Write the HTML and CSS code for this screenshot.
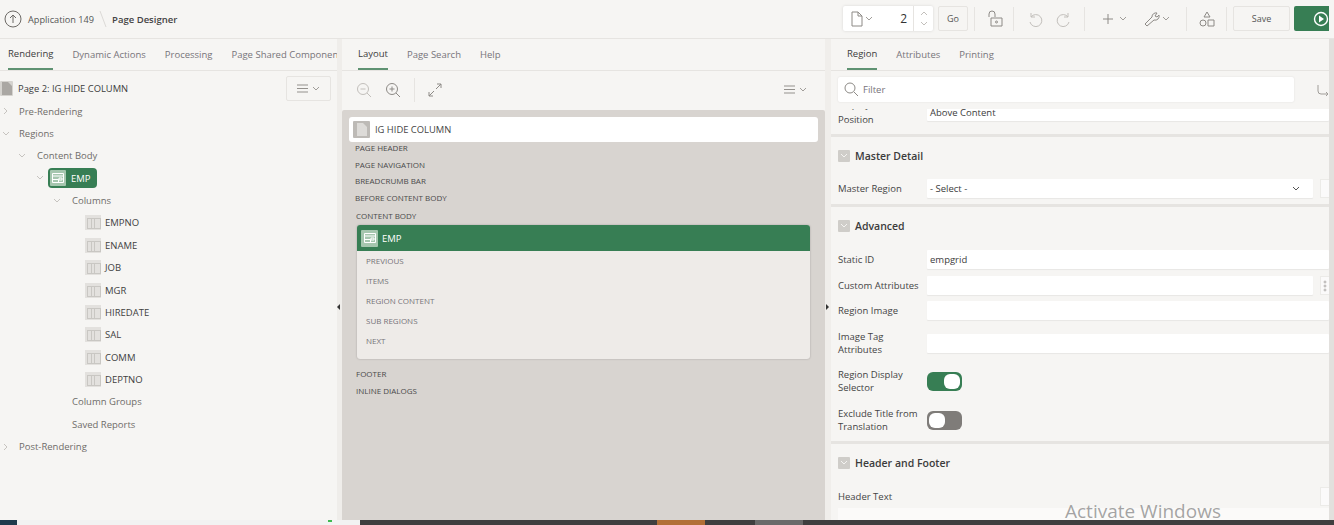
FILE: index.html
```html
<!DOCTYPE html>
<html lang="en">
<head>
<meta charset="utf-8">
<title>Page Designer</title>
<link rel="stylesheet" href="styles.css">
</head>
<body>
<div class="app">
  <header class="topbar">
    <svg class="up" viewBox="0 0 18 18" width="18" height="18"><circle cx="9" cy="9" r="8"/><path d="M9 13V5M6 8l3-3 3 3"/></svg>
    <span class="crumb">Application 149</span>
    <svg class="slash" viewBox="0 0 8 18" width="8" height="18"><path d="M1 1l6 16"/></svg>
    <span class="crumb current">Page Designer</span>
    <div class="tools">
      <div class="pagebox">
        <svg class="ic" viewBox="0 0 12 16" width="12" height="16"><path d="M1 1h6l4 4v10H1zM7 1v4h4"/></svg>
        <svg class="chev" viewBox="0 0 8 5" width="8" height="5"><path d="M1 1l3 3 3-3"/></svg>
        <span class="pagenum">2</span>
        <span class="spin">
          <svg class="chev" viewBox="0 0 8 5" width="8" height="5"><path d="M1 4l3-3 3 3"/></svg>
          <svg class="chev" viewBox="0 0 8 5" width="8" height="5"><path d="M1 1l3 3 3-3"/></svg>
        </span>
      </div>
      <span class="btn go">Go</span>
      <span class="vr vr-a"></span>
      <svg class="ic lock" viewBox="0 0 16 17" width="16" height="17"><path d="M2 7V4a3 3 0 0 1 6 0v3M4 8h11v8H4z"/><circle cx="9.500" cy="12" r="1"/></svg>
      <span class="vr vr-b"></span>
      <svg class="ic faint undo" viewBox="0 0 16 16" width="16" height="16"><path d="M4 2v4h4M4 6a6 6 0 1 1-1 5"/></svg>
      <svg class="ic faint redo" viewBox="0 0 16 16" width="16" height="16"><path d="M12 2v4H8M12 6a6 6 0 1 0 1 5"/></svg>
      <span class="vr vr-c"></span>
      <svg class="ic plus" viewBox="0 0 12 12" width="12" height="12"><path d="M6 1v10M1 6h10"/></svg>
      <svg class="chev chev-gap" viewBox="0 0 8 5" width="8" height="5"><path d="M1 1l3 3 3-3"/></svg>
      <svg class="ic wrench" viewBox="0 0 16 16" width="16" height="16"><path d="M1 13l7-7a4 4 0 0 1 5-4l-2 3 2 1 2-2a4 4 0 0 1-5 5l-7 6z"/></svg>
      <svg class="chev chev-gap2" viewBox="0 0 8 5" width="8" height="5"><path d="M1 1l3 3 3-3"/></svg>
      <span class="vr vr-d"></span>
      <svg class="ic shapes" viewBox="0 0 16 16" width="16" height="16"><path d="M8 1l3 5H5z"/><circle cx="4" cy="12" r="3"/><path d="M9 9h6v6H9z"/></svg>
      <span class="vr vr-e"></span>
      <span class="btn save">Save</span>
      <span class="run"><svg class="play" viewBox="0 0 16 16" width="16" height="16"><circle cx="8" cy="8" r="6.500"/><path class="tri" d="M6 4.500l5 3.500-5 3.500z"/></svg></span>
    </div>
  </header>

  <main class="work">
    <section class="left">
      <nav class="tabs tabs-left">
        <span class="tab active">Rendering</span>
        <span class="tab">Dynamic Actions</span>
        <span class="tab">Processing</span>
        <span class="tab">Page Shared Components</span>
      </nav>
      <div class="pagehead">
        <span class="pageicon"><svg viewBox="0 0 10 13" width="10" height="13"><path d="M0 0h6l4 4v9H0z"/></svg></span>
        <span class="pagetitle">Page 2: IG HIDE COLUMN</span>
        <span class="menubtn">
          <svg class="burger" viewBox="0 0 11 9" width="11" height="9"><path d="M0 1h11M0 4.500h11M0 8h11"/></svg>
          <svg class="chev" viewBox="0 0 8 5" width="8" height="5"><path d="M1 1l3 3 3-3"/></svg>
        </span>
      </div>
      <ul class="tree">
        <li class="node l0"><svg class="twist" viewBox="0 0 8 8" width="8" height="8"><path d="M2 1l3 3-3 3"/></svg>Pre-Rendering</li>
        <li class="node l0"><svg class="twist" viewBox="0 0 8 6" width="8" height="6"><path d="M1 1l3 3 3-3"/></svg>Regions</li>
        <li class="node l1"><svg class="twist" viewBox="0 0 8 6" width="8" height="6"><path d="M1 1l3 3 3-3"/></svg>Content Body</li>
        <li class="node l2">
          <svg class="twist" viewBox="0 0 8 6" width="8" height="6"><path d="M1 1l3 3 3-3"/></svg>
          <span class="badge"><span class="regicon"><svg viewBox="0 0 12 10" width="12" height="10"><path d="M.5.500h11v9H.500zM.5 3h11M.5 6.500h6v3M7 5h3v2H7z"/></svg></span>EMP</span>
        </li>
        <li class="node l3"><svg class="twist" viewBox="0 0 8 6" width="8" height="6"><path d="M1 1l3 3 3-3"/></svg>Columns</li>
        <li class="node leaf"><span class="colicon"></span>EMPNO</li>
        <li class="node leaf"><span class="colicon"></span>ENAME</li>
        <li class="node leaf"><span class="colicon"></span>JOB</li>
        <li class="node leaf"><span class="colicon"></span>MGR</li>
        <li class="node leaf"><span class="colicon"></span>HIREDATE</li>
        <li class="node leaf"><span class="colicon"></span>SAL</li>
        <li class="node leaf"><span class="colicon"></span>COMM</li>
        <li class="node leaf"><span class="colicon"></span>DEPTNO</li>
        <li class="node l3x">Column Groups</li>
        <li class="node l3x">Saved Reports</li>
        <li class="node l0"><svg class="twist" viewBox="0 0 8 8" width="8" height="8"><path d="M2 1l3 3-3 3"/></svg>Post-Rendering</li>
      </ul>
    </section>

    <div class="split"><span class="arrow arrow-l"></span></div>

    <section class="center">
      <nav class="tabs tabs-center">
        <span class="tab active">Layout</span>
        <span class="tab">Page Search</span>
        <span class="tab">Help</span>
      </nav>
      <div class="layout-tools">
        <svg class="ic faint" viewBox="0 0 16 16" width="16" height="16"><circle cx="7" cy="7" r="5.500"/><path d="M11 11l4 4M4.500 7h5"/></svg>
        <svg class="ic zoomin" viewBox="0 0 16 16" width="16" height="16"><circle cx="7" cy="7" r="5.500"/><path d="M11 11l4 4M4.500 7h5M7 4.500v5"/></svg>
        <span class="vr vr-f"></span>
        <svg class="ic" viewBox="0 0 14 14" width="14" height="14"><path d="M8 6l5-5M9 1h4v4M6 8l-5 5M1 9v4h4"/></svg>
        <span class="menu-right">
          <svg class="burger" viewBox="0 0 11 9" width="11" height="9"><path d="M0 1h11M0 4.500h11M0 8h11"/></svg>
          <svg class="chev" viewBox="0 0 8 5" width="8" height="5"><path d="M1 1l3 3 3-3"/></svg>
        </span>
      </div>
      <div class="canvas">
        <div class="pagecard">
          <span class="pageicon small"><svg viewBox="0 0 10 13" width="10" height="13"><path d="M0 0h6l4 4v9H0z"/></svg></span>
          <span>IG HIDE COLUMN</span>
        </div>
        <div class="slots">
          <div class="slot s1">PAGE HEADER</div>
          <div class="slot s2">PAGE NAVIGATION</div>
          <div class="slot s3">BREADCRUMB BAR</div>
          <div class="slot s4">BEFORE CONTENT BODY</div>
          <div class="slot s5">CONTENT BODY</div>
        </div>
        <div class="regioncard">
          <div class="regionhead"><span class="regicon big"><svg viewBox="0 0 12 10" width="12" height="10"><path d="M.5.500h11v9H.500zM.5 3h11M.5 6.500h6v3M7 5h3v2H7z"/></svg></span>EMP</div>
          <div class="regionbody">
            <div class="sub">PREVIOUS</div>
            <div class="sub">ITEMS</div>
            <div class="sub">REGION CONTENT</div>
            <div class="sub">SUB REGIONS</div>
            <div class="sub">NEXT</div>
          </div>
        </div>
        <div class="slots after">
          <div class="slot s6">FOOTER</div>
          <div class="slot s7">INLINE DIALOGS</div>
        </div>
      </div>
    </section>

    <div class="split split-r"><span class="arrow arrow-r"></span></div>

    <section class="right">
      <nav class="tabs tabs-right">
        <span class="tab active">Region</span>
        <span class="tab">Attributes</span>
        <span class="tab">Printing</span>
      </nav>
      <div class="filterrow">
        <div class="filter">
          <svg class="ic" viewBox="0 0 15 15" width="15" height="15"><circle cx="6" cy="6" r="5"/><path d="M10 10l4 4"/></svg>
          <span>Filter</span>
        </div>
        <svg class="ic goto" viewBox="0 0 12 12" width="12" height="12"><path d="M1 1v6a3 3 0 0 0 3 3h7M9 8l2 2-2 2"/></svg>
      </div>
      <div class="props">
        <div class="props-inner">
          <div class="prop clip-first">
            <label class="plabel">Display<br>Position</label>
            <div class="input wide">Above Content</div>
          </div>
          <div class="sep"></div>
          <h3 class="sec"><span class="secbox"><svg class="chev white" viewBox="0 0 8 5" width="8" height="5"><path d="M1 1l3 3 3-3"/></svg></span>Master Detail</h3>
          <div class="prop p-master">
            <label class="plabel">Master Region</label>
            <div class="input narrow select">- Select -<svg class="chev dark" viewBox="0 0 8 5" width="8" height="5"><path d="M1 1l3 3 3-3"/></svg></div>
            <span class="mini"></span>
          </div>
          <div class="sep sep2"></div>
          <h3 class="sec"><span class="secbox"><svg class="chev white" viewBox="0 0 8 5" width="8" height="5"><path d="M1 1l3 3 3-3"/></svg></span>Advanced</h3>
          <div class="prop p-static">
            <label class="plabel">Static ID</label>
            <div class="input wide">empgrid</div>
          </div>
          <div class="prop">
            <label class="plabel">Custom Attributes</label>
            <div class="input narrow"></div>
            <span class="mini dots"><svg viewBox="0 0 4 12" width="4" height="12"><circle cx="2" cy="2" r="1"/><circle cx="2" cy="6" r="1"/><circle cx="2" cy="10" r="1"/></svg></span>
          </div>
          <div class="prop p-image">
            <label class="plabel">Region Image</label>
            <div class="input wide"></div>
          </div>
          <div class="prop tall-a">
            <label class="plabel">Image Tag<br>Attributes</label>
            <div class="input wide"></div>
          </div>
          <div class="prop tall-b">
            <label class="plabel">Region Display<br>Selector</label>
            <span class="toggle on"><span class="knob"></span></span>
          </div>
          <div class="prop tall-c">
            <label class="plabel">Exclude Title from<br>Translation</label>
            <span class="toggle off"><span class="knob"></span></span>
          </div>
          <div class="sep sep3"></div>
          <h3 class="sec sec-hf"><span class="secbox"><svg class="chev white" viewBox="0 0 8 5" width="8" height="5"><path d="M1 1l3 3 3-3"/></svg></span>Header and Footer</h3>
          <div class="prop p-head">
            <label class="plabel">Header Text</label>
            <span class="mini end"></span>
          </div>
          <div class="textarea"></div>
        </div>
      </div>
    </section>
    <div class="scrollbar"></div>
    <div class="watermark">Activate Windows</div>
  </main>

  <footer class="taskbar">
    <span class="tb-start"></span>
    <span class="tb-search"><span class="tb-dot"></span></span>
    <span class="tb-fill"></span>
    <span class="tb-orange"></span>
    <span class="tb-gap"></span>
    <span class="tb-grey"></span>
  </footer>
</div>
</body>
</html>
```
FILE: styles.css
```css
* { box-sizing: border-box; }
html, body { margin: 0; padding: 0; height: 100%; overflow: hidden; }
body { font-family: "Open Sans", "Noto Sans", sans-serif; font-size: 9.500px; color: #444; background: #f5f4f2; }
svg { display: block; flex: none; fill: none; stroke: #8a8784; stroke-width: 1; }
ul { list-style: none; margin: 0; padding: 0; }

.app { height: 525px; display: flex; flex-direction: column; }

/* top bar */
.topbar { height: 39px; flex: none; display: flex; align-items: center; padding-left: 4px; padding-right: 5px; border-bottom: 1px solid #e6e4e1; background: #f6f5f3; }
.up { margin-right: 6px; stroke: #6d6a66; }
.crumb { font-size: 9.200px; color: #555; }
.crumb.current { color: #444; font-size: 9.500px; font-weight: 600; }
.slash { margin: 0 5px 0 5px; stroke: #dcdad7; }
.tools { margin-left: auto; display: flex; align-items: center; height: 100%; padding-bottom: 1px; }
.pagebox { width: 90px; height: 25px; background: #fff; border-radius: 2px; box-shadow: 0 0 3px rgba(0,0,0,.13); display: flex; align-items: center; padding-left: 8px; }
.pagebox .chev { margin-left: 2px; }
.pagenum { margin-left: auto; font-size: 12px; color: #333; margin-right: 6px; }
.spin { width: 20px; height: 25px; border-left: 1px solid #e6e4e1; display: flex; flex-direction: column; align-items: center; justify-content: space-evenly; }
.spin .chev { margin-left: 0; stroke: #c2bfbb; }
.chev { stroke: #a09d99; }
.ic { stroke: #8d8a86; }
.ic.faint { stroke: #c2bfbb; }
.btn { height: 25px; border: 1px solid #e6e4e1; border-radius: 2px; display: flex; align-items: center; justify-content: center; font-size: 9px; color: #555; background: #f6f5f3; }
.go { width: 30px; margin-left: 5px; }
.vr { width: 1px; height: 24px; background: #e6e4e1; flex: none; }
.vr-a { margin-left: 6px; }
.lock { margin-left: 12px; }
.vr-b { margin-left: 10px; }
.undo { margin-left: 13px; }
.redo { margin-left: 13px; }
.vr-c { margin-left: 12px; }
.plus { margin-left: 17px; }
.chev-gap { margin-left: 5px; }
.wrench { margin-left: 17px; }
.chev-gap2 { margin-left: 2px; }
.vr-d { margin-left: 16px; }
.shapes { margin-left: 12px; }
.vr-e { margin-left: 11px; }
.save { width: 57px; margin-left: 6px; }
.run { width: 35px; height: 25px; margin-left: 4px; background: #377e54; border-radius: 2px 0 0 2px; display: flex; align-items: center; justify-content: flex-end; }
.play { stroke: #fff; stroke-width: 1.400; }
.play .tri { fill: #fff; stroke: none; }

/* work area */
.work { position: relative; flex: 1; min-height: 0; display: flex; }
.left { width: 337px; flex: none; background: #f6f5f3; overflow: hidden; }
.split { position: relative; width: 5px; flex: none; background: #efedea; }
.split-r { width: 6px; background: #f0eeeb; }
.arrow { position: absolute; top: 265px; width: 0; height: 0; border-top: 3.500px solid transparent; border-bottom: 3.500px solid transparent; }
.arrow-l { left: 0; border-right: 3.500px solid #333; }
.arrow-r { left: 1px; border-left: 3.500px solid #333; }
.center { width: 483px; flex: none; display: flex; flex-direction: column; background: #f6f5f3; }
.right { flex: 1; min-width: 0; display: flex; flex-direction: column; background: #f6f5f3; overflow: hidden; }
.scrollbar { width: 5px; flex: none; background: #e2e0dd; }

/* tabs */
.tabs { height: 32px; flex: none; display: flex; gap: 19px; padding-left: 8px; border-bottom: 1px solid #e6e4e1; white-space: nowrap; overflow: hidden; }
.tabs-center { padding-left: 16px; }
.tabs-right { padding-left: 16px; }
.tab { height: 31px; display: flex; align-items: center; color: #77747a; font-size: 9.500px; padding-bottom: 1px; }
.tab.active { color: #3c3c3c; border-bottom: 2px solid #5f9272; padding-top: 1px; }

/* left */
.pagehead { height: 29px; display: flex; align-items: center; padding: 5px 0 0 0; }
.pageicon { width: 13px; height: 15px; background: #d5d3cf; display: flex; align-items: center; justify-content: center; margin-right: 5px; border-radius: 1px; }
.pageicon svg { fill: #aaa7a3; stroke: none; }
.pagetitle { font-size: 9.400px; color: #3c3c3c; }
.menubtn { width: 45px; height: 25px; margin-left: auto; margin-right: 6px; border: 1px solid #e6e4e1; border-radius: 2px; display: flex; align-items: center; justify-content: center; gap: 4px; }
.burger { stroke: #94918d; }
.node { height: 22.370px; display: flex; align-items: center; color: #6f6c69; font-size: 9.500px; white-space: nowrap; }
.twist { stroke: #c6c3bf; }
.l0 { padding-left: 2px; }
.l0 .twist { margin-right: 9px; }
.l1 { padding-left: 18px; }
.l1 .twist { margin-right: 11px; }
.l2 { padding-left: 36px; }
.l2 .twist { margin-right: 4px; }
.l3 { padding-left: 53px; }
.l3 .twist { margin-right: 11px; }
.l3x { padding-left: 72px; }
.leaf { padding-left: 85px; color: #3f3f3f; }
.badge { width: 49px; height: 20px; background: #377e54; border-radius: 4px; color: #fff; display: flex; align-items: center; gap: 5px; padding-left: 2px; }
.regicon { width: 16px; height: 16px; background: #a5c6ae; border-radius: 1px; display: flex; align-items: center; justify-content: center; }
.regicon svg { stroke: #fff; }
.colicon { width: 16px; height: 15px; margin-right: 4px; background: #e3e1de; position: relative; }
.colicon::after { content: ""; position: absolute; left: 2px; top: 3px; width: 12px; height: 9px; border: 1px solid #c9c7c3; background: linear-gradient(90deg, transparent 3px, #c9c7c3 3px, #c9c7c3 4px, transparent 4px, transparent 6px, #c9c7c3 6px, #c9c7c3 7px, transparent 7px); }

/* center */
.layout-tools { height: 39px; flex: none; display: flex; align-items: center; padding: 0 18px 2px 14px; }
.zoomin { margin-left: 13px; }
.vr-f { margin: 0 13px; }
.menu-right { margin-left: auto; display: flex; align-items: center; gap: 4px; }
.canvas { flex: 1; background: #d8d4d0; padding: 7px 7px 0; overflow: hidden; border-radius: 2px 2px 0 0; }
.pagecard { height: 25px; background: #fff; border-radius: 3px; display: flex; align-items: center; padding: 0 0 1px 4px; color: #444; font-size: 9.400px; }
.pageicon.small { width: 17px; height: 17px; background: #bdbab6; margin-right: 5px; }
.pageicon.small svg { fill: #dddbd8; }
.slots { padding-left: 6px; font-size: 8px; color: #4a4a4a; }
.slot { white-space: nowrap; line-height: 11px; }
.s1 { margin-top: 0; }
.s2, .s3 { margin-top: 5.500px; }
.s4 { margin-top: 6px; }
.s5 { margin-top: 7px; padding-left: 1px; }
.regioncard { margin: 4px 8px 0; background: #eeebe8; border-radius: 3px; box-shadow: 0 0 2px rgba(0,0,0,.25); }
.regionhead { height: 26px; background: #377e54; border-radius: 3px 3px 0 0; color: #fff; font-size: 9.500px; display: flex; align-items: center; gap: 4px; padding-left: 4px; }
.regicon.big { width: 17px; height: 17px; }
.regionbody { height: 108px; padding-left: 9px; font-size: 8px; color: #77747a; }
.sub { height: 20px; line-height: 12px; display: flex; align-items: center; }
.after { padding-top: 9px; padding-left: 7px; }
.s7 { margin-top: 6px; }

/* right */
.filterrow { height: 38px; flex: none; display: flex; align-items: center; padding-left: 7px; padding-bottom: 1px; }
.filter { width: 456px; height: 25px; background: #fff; border-radius: 2px; box-shadow: 0 0 2px rgba(0,0,0,.1); display: flex; align-items: center; gap: 4px; padding-left: 6px; color: #77747a; font-size: 9.500px; }
.goto { margin-left: auto; stroke: #a09d99; }
.props { flex: 1; min-height: 0; overflow: hidden; }
.props-inner { margin-top: -9px; }
.prop { min-height: 19px; margin-top: 7px; display: flex; align-items: center; padding-left: 7px; }
.plabel { width: 89px; flex: none; font-size: 9.500px; line-height: 13px; color: #444; }
.input { height: 19px; background: #fff; font-size: 9.500px; color: #3c3c3c; display: flex; align-items: center; padding-left: 3px; border-radius: 1px; box-shadow: 0 1px 1px rgba(0,0,0,.06); }
.wide { flex: 1; }
.narrow { width: 386px; flex: none; }
.select { justify-content: space-between; padding-right: 13px; }
.chev.dark { stroke: #555; }
.chev.white { stroke: #f4f3f1; }
.mini { width: 9px; height: 19px; margin-left: 7px; background: #fbfafa; border: 1px solid #ecebe8; border-right: 0; display: flex; align-items: center; justify-content: center; }
.mini svg { stroke: #9a9793; stroke-width: .7; }
.clip-first { margin-top: 0; height: 27px; align-items: flex-start; }
.clip-first .input { margin-top: 4px; height: 17px; }
.clip-first .plabel { margin-top: -3px; line-height: 15px; }
.sep { height: 3px; background: #e6e4e1; margin-top: 7px; }
.sep2 { margin-top: 6px; }
.sep3 { margin-top: 8px; }
.sec { height: 19px; margin: 9px 0 0; padding-left: 7px; display: flex; align-items: center; gap: 5px; font-size: 10.500px; font-weight: 600; color: #3c3c3c; }
.secbox { width: 12px; height: 12px; background: #cfcdc9; display: flex; align-items: center; justify-content: center; border-radius: 1px; }
.p-master { margin-top: 14px; }
.p-static { margin-top: 15px; }
.p-image { margin-top: 6px; }
.tall-a { margin-top: 10px; }
.tall-b { margin-top: 12px; }
.tall-c { margin-top: 13px; }
.toggle { width: 35px; height: 19px; border-radius: 6px; display: flex; align-items: center; padding: 2px; }
.toggle.on { background: #377e54; justify-content: flex-end; }
.toggle.off { background: #7f7c79; justify-content: flex-start; }
.knob { width: 16px; height: 15px; background: #fff; border-radius: 6px; }
.p-head { margin-top: 15px; }
.end { margin-left: auto; }
.textarea { height: 30px; margin: 2px 0 0 7px; background: #fbfaf9; }

/* overlay */
.watermark { position: absolute; left: 1065px; top: 459px; font-family: "Open Sans", sans-serif; font-size: 19px; color: rgba(130,130,130,.72); white-space: nowrap; pointer-events: none; }

/* taskbar */
.taskbar { height: 5px; flex: none; display: flex; background: #3f3f3f; }
.tb-start { width: 17px; background: #1f3a4d; }
.tb-search { width: 343px; background: #f2f2f2; display: flex; justify-content: flex-end; }
.tb-dot { width: 4px; height: 2px; margin-right: 28px; background: #3fb950; }
.tb-fill { width: 297px; }
.tb-orange { width: 48px; background: #b26f36; }
.tb-gap { width: 50px; }
.tb-grey { width: 48px; background: #6a6a6a; }
```
